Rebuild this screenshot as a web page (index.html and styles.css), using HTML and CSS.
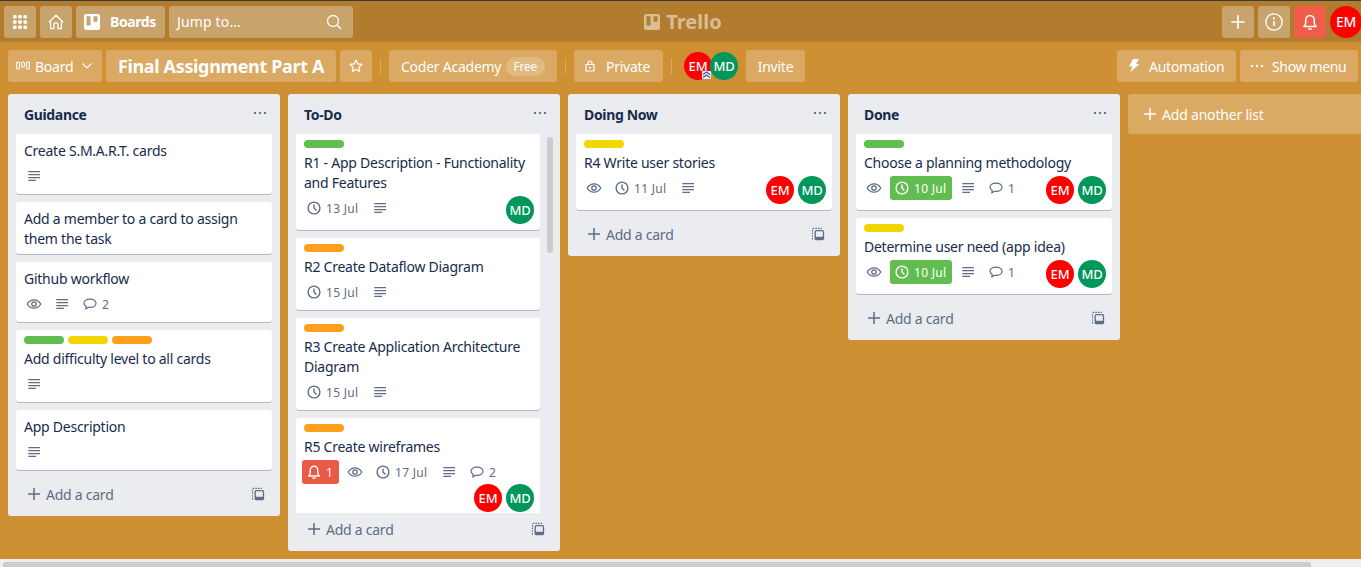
FILE: index.html
```html
<!DOCTYPE html>
<html lang="en">
<head>
  <meta charset="UTF-8">
  <meta name="viewport" content="width=device-width, initial-scale=1.0">
  <title>Final Assignment Part A | Trello</title>
  <link rel="stylesheet" href="styles.css">
</head>
<body>
  <!-- shared icons -->
  <svg class="sprite" xmlns="http://www.w3.org/2000/svg">
    <symbol id="i-eye" viewBox="0 0 16 16"><path d="M1.2 8C2.9 5.2 5.2 3.8 8 3.8s5.1 1.4 6.8 4.2c-1.7 2.8-4 4.2-6.8 4.2S2.9 10.800 1.200 8z" fill="none" stroke="currentColor" stroke-width="1.300"/><circle cx="8" cy="8" r="2.200" fill="none" stroke="currentColor" stroke-width="1.300"/></symbol>
    <symbol id="i-clock" viewBox="0 0 16 16"><circle cx="8" cy="8" r="5.900" fill="none" stroke="currentColor" stroke-width="1.400"/><path d="M8 4.400V8l2.400 2.400" fill="none" stroke="currentColor" stroke-width="1.400"/></symbol>
    <symbol id="i-desc" viewBox="0 0 16 16"><path d="M2.300 3.600h11.700M2.300 6.600h11.700M2.300 9.600h11.700M2.300 12.400h7.700" fill="none" stroke="currentColor" stroke-width="1.100"/></symbol>
    <symbol id="i-comment" viewBox="0 0 16 16"><path d="M8 3.200c3.300 0 6 1.700 6 4.100s-2.700 4.100-6 4.100c-.6 0-1.100 0-1.600-.1L3.800 13l.4-2.800C2.800 9.500 2 8.500 2 7.300c0-2.400 2.700-4.100 6-4.100z" fill="none" stroke="currentColor" stroke-width="1.200" stroke-linejoin="round"/></symbol>
    <symbol id="i-bell" viewBox="0 0 16 16"><path d="M2.600 12c1.200-.9 1.600-2 1.600-3.600V6.400C4.200 4 5.900 2.200 8 2.200s3.800 1.800 3.800 4.200v2c0 1.600.4 2.700 1.600 3.600z" fill="none" stroke="currentColor" stroke-width="1.400" stroke-linejoin="round"/><path d="M6.400 14.200h3.200" stroke="currentColor" stroke-width="1.400"/></symbol>
    <symbol id="i-plus" viewBox="0 0 16 16"><path d="M8 2v12M2 8h12" stroke="currentColor" stroke-width="1.500"/></symbol>
    <symbol id="i-dots" viewBox="0 0 16 16"><circle cx="3" cy="8" r="1.200" fill="currentColor"/><circle cx="8" cy="8" r="1.200" fill="currentColor"/><circle cx="13" cy="8" r="1.200" fill="currentColor"/></symbol>
    <symbol id="i-template" viewBox="0 0 16 16"><rect x="5.200" y="4.700" width="8.300" height="8.800" rx="1.200" fill="none" stroke="currentColor" stroke-width="1.300"/><rect x="5" y="10.800" width="8.600" height="2.700" fill="currentColor"/><path d="M2.500 13.500V3.200a.8.800 0 0 1 .8-.8H12" fill="none" stroke="currentColor" stroke-width="1.100" stroke-dasharray="1.600 1.100"/></symbol>
    <symbol id="i-boards" viewBox="0 0 16 16"><path fill-rule="evenodd" d="M2.500 0h11A2.500 2.500 0 0 1 16 2.500v11a2.500 2.500 0 0 1-2.500 2.500h-11A2.500 2.500 0 0 1 0 13.500v-11A2.500 2.500 0 0 1 2.500 0zM2.500 2.200v9.300h4V2.200zM9.500 2.200v5.600h4V2.200z" fill="currentColor"/></symbol>
  </svg>

  <header class="topbar">
    <div class="topbar-left">
      <button class="nav-btn">
        <svg class="icon" viewBox="0 0 16 16"><g fill="currentColor"><rect x="1" y="1" width="3.600" height="3.600" rx="1"/><rect x="6.200" y="1" width="3.600" height="3.600" rx="1"/><rect x="11.400" y="1" width="3.600" height="3.600" rx="1"/><rect x="1" y="6.200" width="3.600" height="3.600" rx="1"/><rect x="6.200" y="6.200" width="3.600" height="3.600" rx="1"/><rect x="11.400" y="6.200" width="3.600" height="3.600" rx="1"/><rect x="1" y="11.400" width="3.600" height="3.600" rx="1"/><rect x="6.200" y="11.400" width="3.600" height="3.600" rx="1"/><rect x="11.400" y="11.400" width="3.600" height="3.600" rx="1"/></g></svg>
      </button>
      <button class="nav-btn">
        <svg class="icon" viewBox="0 0 16 16"><path d="M1.300 7.700 8 1.300l6.700 6.400-1.300 1.100v5.900h-3.300v-4a2.100 2.100 0 0 0-4.200 0v4H2.600V8.800z" fill="none" stroke="currentColor" stroke-width="1.300" stroke-linejoin="round"/></svg>
      </button>
      <button class="nav-btn nav-boards">
        <svg class="icon"><use href="#i-boards"/></svg>
        <span>Boards</span>
      </button>
      <div class="search">
        <span class="search-text">Jump to…</span>
        <svg class="icon" viewBox="0 0 16 16"><circle cx="7" cy="7" r="5.500" fill="none" stroke="currentColor" stroke-width="1.300"/><path d="m11 11 4 4" stroke="currentColor" stroke-width="1.500"/></svg>
      </div>
    </div>
    <div class="logo">
      <svg class="logo-icon"><use href="#i-boards"/></svg>
      <span>Trello</span>
    </div>
    <div class="topbar-right">
      <button class="nav-btn"><svg class="icon-big"><use href="#i-plus"/></svg></button>
      <button class="nav-btn">
        <svg class="icon-big" viewBox="0 0 16 16"><circle cx="8" cy="8" r="7.200" fill="none" stroke="currentColor" stroke-width="1.200"/><path d="M8 7v4.500" stroke="currentColor" stroke-width="1.400"/><circle cx="8" cy="4.800" r="1" fill="currentColor"/></svg>
      </button>
      <button class="nav-btn nav-alert"><svg class="icon-big"><use href="#i-bell"/></svg></button>
      <div class="avatar avatar-em avatar-me">EM</div>
    </div>
  </header>

  <div class="board-head">
    <button class="head-btn head-view">
      <svg class="icon-view" viewBox="0 0 14 10"><g fill="none" stroke="currentColor" stroke-width="1.100"><rect x=".6" y="1" width="2.800" height="7" rx="1"/><rect x="5.600" y="1" width="2.800" height="5" rx="1"/><rect x="10.600" y="1" width="2.800" height="7" rx="1"/></g></svg>
      <span class="head-text">Board</span>
      <svg class="icon-chevron" viewBox="0 0 10 6"><path d="m.5.500 4.500 4.500L9.500.500" fill="none" stroke="currentColor" stroke-width="1.100"/></svg>
    </button>
    <h1 class="head-btn board-title">Final Assignment Part A</h1>
    <button class="head-btn head-square">
      <svg class="icon" viewBox="0 0 16 16"><path d="m8 2 1.800 3.900 4.200.5-3.100 2.900.8 4.200L8 11.400l-3.700 2.100.8-4.200L2 6.400l4.200-.5z" fill="none" stroke="currentColor" stroke-width="1.200" stroke-linejoin="round"/></svg>
    </button>
    <span class="divider"></span>
    <button class="head-btn head-team">
      <span class="head-text">Coder Academy</span>
      <span class="pill">Free</span>
    </button>
    <span class="divider"></span>
    <button class="head-btn head-private">
      <svg class="icon-lock" viewBox="0 0 10 12"><path d="M1 4.500h8v6.500H1zM3 4.500V3a2 2 0 0 1 4 0v1.500" fill="none" stroke="currentColor" stroke-width="1.200"/><circle cx="5" cy="7.700" r="1" fill="currentColor"/></svg>
      <span class="head-text">Private</span>
    </button>
    <span class="divider"></span>
    <div class="head-members">
      <div class="avatar avatar-em">EM
        <svg class="admin-mark" viewBox="0 0 9 8"><rect width="9" height="8" rx="1" fill="#e8edf5"/><path d="m1 3.500 3.500-2.500L8 3.500M1 6.500 4.500 4 8 6.500" fill="none" stroke="#2a5fb0" stroke-width="1.100"/></svg>
      </div>
      <div class="avatar avatar-md">MD</div>
    </div>
    <button class="head-btn head-invite"><span class="head-text">Invite</span></button>
    <div class="head-right">
      <button class="head-btn head-auto">
        <svg class="icon-bolt" viewBox="0 0 12 14"><path d="M5 0h6L8 5h3.500L2 13.500 4.500 7.500H1z" fill="currentColor"/></svg>
        <span class="head-text">Automation</span>
      </button>
      <button class="head-btn head-menu">
        <svg class="icon"><use href="#i-dots"/></svg>
        <span class="head-text">Show menu</span>
      </button>
    </div>
  </div>

  <main class="board">
    <section class="list">
      <div class="list-head"><h2>Guidance</h2><svg class="icon list-more"><use href="#i-dots"/></svg></div>
      <div class="cards">
        <article class="card">
          <p class="card-title">Create S.M.A.R.T. cards</p>
          <div class="card-foot"><div class="badges">
            <span class="badge"><svg class="icon"><use href="#i-desc"/></svg></span>
          </div></div>
        </article>
        <article class="card">
          <p class="card-title">Add a member to a card to assign them the task</p>
        </article>
        <article class="card">
          <p class="card-title">Github workflow</p>
          <div class="card-foot"><div class="badges">
            <span class="badge"><svg class="icon"><use href="#i-eye"/></svg></span>
            <span class="badge"><svg class="icon"><use href="#i-desc"/></svg></span>
            <span class="badge"><svg class="icon"><use href="#i-comment"/></svg><span class="badge-text">2</span></span>
          </div></div>
        </article>
        <article class="card">
          <div class="labels"><span class="label green"></span><span class="label yellow"></span><span class="label orange"></span></div>
          <p class="card-title">Add difficulty level to all cards</p>
          <div class="card-foot"><div class="badges">
            <span class="badge"><svg class="icon"><use href="#i-desc"/></svg></span>
          </div></div>
        </article>
        <article class="card">
          <p class="card-title">App Description</p>
          <div class="card-foot"><div class="badges">
            <span class="badge"><svg class="icon"><use href="#i-desc"/></svg></span>
          </div></div>
        </article>
      </div>
      <div class="list-foot"><svg class="icon"><use href="#i-plus"/></svg><span class="foot-text">Add a card</span><svg class="icon template"><use href="#i-template"/></svg></div>
    </section>

    <section class="list">
      <div class="list-head"><h2>To-Do</h2><svg class="icon list-more"><use href="#i-dots"/></svg></div>
      <div class="cards cards-scroll">
        <article class="card">
          <div class="labels"><span class="label green"></span></div>
          <p class="card-title">R1 - App Description - Functionality and Features</p>
          <div class="card-foot">
            <div class="badges">
              <span class="badge"><svg class="icon"><use href="#i-clock"/></svg><span class="badge-text date">13 Jul</span></span>
              <span class="badge"><svg class="icon"><use href="#i-desc"/></svg></span>
            </div>
            <div class="members"><div class="avatar avatar-md">MD</div></div>
          </div>
        </article>
        <article class="card">
          <div class="labels"><span class="label orange"></span></div>
          <p class="card-title">R2 Create Dataflow Diagram</p>
          <div class="card-foot"><div class="badges">
            <span class="badge"><svg class="icon"><use href="#i-clock"/></svg><span class="badge-text date">15 Jul</span></span>
            <span class="badge"><svg class="icon"><use href="#i-desc"/></svg></span>
          </div></div>
        </article>
        <article class="card">
          <div class="labels"><span class="label orange"></span></div>
          <p class="card-title">R3 Create Application Architecture Diagram</p>
          <div class="card-foot"><div class="badges">
            <span class="badge"><svg class="icon"><use href="#i-clock"/></svg><span class="badge-text date">15 Jul</span></span>
            <span class="badge"><svg class="icon"><use href="#i-desc"/></svg></span>
          </div></div>
        </article>
        <article class="card">
          <div class="labels"><span class="label orange"></span></div>
          <p class="card-title">R5 Create wireframes</p>
          <div class="card-foot">
            <div class="badges">
              <span class="badge badge-alert"><svg class="icon"><use href="#i-bell"/></svg><span class="badge-text">1</span></span>
              <span class="badge"><svg class="icon"><use href="#i-eye"/></svg></span>
              <span class="badge"><svg class="icon"><use href="#i-clock"/></svg><span class="badge-text date">17 Jul</span></span>
              <span class="badge"><svg class="icon"><use href="#i-desc"/></svg></span>
              <span class="badge"><svg class="icon"><use href="#i-comment"/></svg><span class="badge-text">2</span></span>
            </div>
            <div class="members"><div class="avatar avatar-em">EM</div><div class="avatar avatar-md">MD</div></div>
          </div>
        </article>
      </div>
      <span class="scroll-thumb"></span>
      <div class="list-foot"><svg class="icon"><use href="#i-plus"/></svg><span class="foot-text">Add a card</span><svg class="icon template"><use href="#i-template"/></svg></div>
    </section>

    <section class="list">
      <div class="list-head"><h2>Doing Now</h2><svg class="icon list-more"><use href="#i-dots"/></svg></div>
      <div class="cards">
        <article class="card">
          <div class="labels"><span class="label yellow"></span></div>
          <p class="card-title">R4 Write user stories</p>
          <div class="card-foot">
            <div class="badges">
              <span class="badge"><svg class="icon"><use href="#i-eye"/></svg></span>
              <span class="badge"><svg class="icon"><use href="#i-clock"/></svg><span class="badge-text date">11 Jul</span></span>
              <span class="badge"><svg class="icon"><use href="#i-desc"/></svg></span>
            </div>
            <div class="members"><div class="avatar avatar-em">EM</div><div class="avatar avatar-md">MD</div></div>
          </div>
        </article>
      </div>
      <div class="list-foot"><svg class="icon"><use href="#i-plus"/></svg><span class="foot-text">Add a card</span><svg class="icon template"><use href="#i-template"/></svg></div>
    </section>

    <section class="list">
      <div class="list-head"><h2>Done</h2><svg class="icon list-more"><use href="#i-dots"/></svg></div>
      <div class="cards">
        <article class="card">
          <div class="labels"><span class="label green"></span></div>
          <p class="card-title">Choose a planning methodology</p>
          <div class="card-foot">
            <div class="badges">
              <span class="badge"><svg class="icon"><use href="#i-eye"/></svg></span>
              <span class="badge badge-done"><svg class="icon"><use href="#i-clock"/></svg><span class="badge-text date">10 Jul</span></span>
              <span class="badge"><svg class="icon"><use href="#i-desc"/></svg></span>
              <span class="badge"><svg class="icon"><use href="#i-comment"/></svg><span class="badge-text">1</span></span>
            </div>
            <div class="members"><div class="avatar avatar-em">EM</div><div class="avatar avatar-md">MD</div></div>
          </div>
        </article>
        <article class="card">
          <div class="labels"><span class="label yellow"></span></div>
          <p class="card-title">Determine user need (app idea)</p>
          <div class="card-foot">
            <div class="badges">
              <span class="badge"><svg class="icon"><use href="#i-eye"/></svg></span>
              <span class="badge badge-done"><svg class="icon"><use href="#i-clock"/></svg><span class="badge-text date">10 Jul</span></span>
              <span class="badge"><svg class="icon"><use href="#i-desc"/></svg></span>
              <span class="badge"><svg class="icon"><use href="#i-comment"/></svg><span class="badge-text">1</span></span>
            </div>
            <div class="members"><div class="avatar avatar-em">EM</div><div class="avatar avatar-md">MD</div></div>
          </div>
        </article>
      </div>
      <div class="list-foot"><svg class="icon"><use href="#i-plus"/></svg><span class="foot-text">Add a card</span><svg class="icon template"><use href="#i-template"/></svg></div>
    </section>

    <div class="add-list"><svg class="icon"><use href="#i-plus"/></svg><span class="head-text">Add another list</span></div>
  </main>

  <div class="page-scroll"><span class="page-thumb"></span></div>
</body>
</html>
```

FILE: styles.css
```css
* {
  box-sizing: border-box;
}
html, body {
  height: 100%;
}
body {
  margin: 0;
  display: flex;
  flex-direction: column;
  overflow: hidden;
  background-color: #cf8f33;
  color: #172b4d;
  font-family: "Noto Sans", "Open Sans", sans-serif;
  font-size: 14px;
  letter-spacing: -0.25px;
  line-height: 20px;
}
button {
  border: none;
  padding: 0;
  color: inherit;
  font: inherit;
  letter-spacing: inherit;
}
h1, h2, p {
  margin: 0;
}
.sprite {
  display: none;
}
.icon {
  width: 16px;
  height: 16px;
  flex-shrink: 0;
}
.icon-big {
  width: 18px;
  height: 18px;
  flex-shrink: 0;
}

/* top bar */
.topbar {
  display: grid;
  grid-template-columns: 1fr auto 1fr;
  align-items: center;
  flex-shrink: 0;
  height: 42px;
  padding: 5px 0 4px 4px;
  border-top: 1px solid #3b3b3b;
  background-color: #b17c2d;
  color: #fff;
}
.topbar-left, .topbar-right {
  display: flex;
  align-items: center;
  gap: 4px;
}
.topbar-right {
  justify-content: flex-end;
  margin-right: -1px;
}
.nav-btn {
  display: flex;
  align-items: center;
  justify-content: center;
  width: 32px;
  height: 32px;
  border-radius: 3px;
  background-color: rgba(255, 255, 255, 0.3);
}
.nav-boards {
  justify-content: flex-start;
  gap: 10px;
  width: 89px;
  padding-left: 8px;
  font-weight: 700;
  letter-spacing: -0.4px;
}
.search {
  display: flex;
  align-items: center;
  justify-content: space-between;
  width: 184px;
  height: 32px;
  padding: 0 11px 0 8px;
  border-radius: 3px;
  background-color: rgba(255, 255, 255, 0.3);
}
.search-text {
  letter-spacing: 0.15px;
}
.logo {
  display: flex;
  align-items: center;
  gap: 6px;
  margin-left: 1px;
  color: rgba(255, 255, 255, 0.5);
  font-size: 20px;
  font-weight: 700;
  letter-spacing: 0;
}
.logo-icon {
  width: 16px;
  height: 16px;
}
.nav-alert {
  background-color: #ee5e4a;
}
.avatar {
  position: relative;
  display: flex;
  align-items: center;
  justify-content: center;
  flex-shrink: 0;
  width: 28px;
  height: 28px;
  border-radius: 50%;
  color: #fff;
  font-size: 13px;
  font-weight: 500;
  letter-spacing: -0.2px;
}
.avatar-em {
  background-color: #f00;
}
.avatar-md {
  background-color: #00975b;
}
.avatar-me {
  width: 32px;
  height: 32px;
  font-size: 14px;
}

/* board header */
.board-head {
  display: flex;
  align-items: center;
  flex-shrink: 0;
  gap: 4px;
  padding: 8px 3px 12px 8px;
  color: #fff;
}
.head-btn {
  display: flex;
  align-items: center;
  height: 32px;
  border-radius: 3px;
  background-color: rgba(255, 255, 255, 0.24);
  white-space: nowrap;
}
.head-text {
  padding-top: 2px;
}
.head-view {
  width: 94px;
  padding-left: 8px;
}
.icon-view {
  width: 14px;
  height: 10px;
  margin-right: 5px;
}
.icon-chevron {
  width: 10px;
  height: 6px;
  margin-left: 9px;
}
.board-title {
  justify-content: center;
  width: 230px;
  font-size: 18px;
  font-weight: 700;
  letter-spacing: -0.35px;
}
.head-square {
  justify-content: center;
  width: 32px;
}
.divider {
  width: 1px;
  height: 16px;
  margin: 0 4px;
  background-color: rgba(255, 255, 255, 0.24);
}
.head-team {
  justify-content: space-between;
  width: 168px;
  padding: 0 12px;
}
.pill {
  margin-top: 1px;
  padding: 0 8px;
  border-radius: 10px;
  background-color: rgba(255, 255, 255, 0.2);
  font-size: 12px;
  line-height: 19px;
}
.head-private {
  gap: 11px;
  width: 89px;
  padding-left: 11px;
}
.icon-lock {
  width: 10px;
  height: 12px;
}
.head-members {
  display: flex;
  margin: 0 4px;
}
.head-members .avatar + .avatar {
  margin-left: -2px;
}
.admin-mark {
  position: absolute;
  right: 1px;
  bottom: 1px;
  width: 9px;
  height: 8px;
}
.head-invite {
  justify-content: center;
  width: 59px;
}
.head-right {
  display: flex;
  gap: 4px;
  margin-left: auto;
}
.head-auto {
  gap: 9px;
  width: 119px;
  padding-left: 11px;
}
.icon-bolt {
  width: 12px;
  height: 14px;
}
.head-menu {
  gap: 7px;
  width: 118px;
  padding-left: 9px;
  letter-spacing: -0.35px;
}

/* lists */
.board {
  display: flex;
  align-items: flex-start;
  flex: 1;
  gap: 8px;
  min-height: 0;
  padding: 0 0 8px 8px;
  overflow: hidden;
}
.list {
  position: relative;
  display: flex;
  flex-direction: column;
  flex-shrink: 0;
  width: 272px;
  max-height: 100%;
  border-radius: 3px;
  background-color: #ebecf0;
}
.list-head {
  display: flex;
  align-items: center;
  justify-content: space-between;
  flex-shrink: 0;
  height: 40px;
  padding: 0 12px 0 16px;
}
.list-head h2 {
  padding-top: 2px;
  font-size: 14px;
  font-weight: 700;
  letter-spacing: -0.35px;
}
.list-more {
  color: #6b778c;
  margin-top: -2px;
}
.cards {
  flex: 0 1 auto;
  min-height: 0;
  padding: 0 8px;
  overflow: hidden;
}
.cards-scroll {
  padding-right: 20px;
}
.scroll-thumb {
  position: absolute;
  top: 43px;
  right: 7px;
  width: 6px;
  height: 116px;
  border-radius: 3px;
  background-color: #ccc;
}
.list-foot {
  display: flex;
  align-items: center;
  flex-shrink: 0;
  gap: 4px;
  height: 38px;
  padding: 0 14px 6px 18px;
  color: #5e6c84;
}
.foot-text {
  padding-top: 2px;
}
.template {
  margin-left: auto;
}

/* cards */
.card {
  margin-bottom: 8px;
  padding: 6px 6px 2px 8px;
  border-radius: 3px;
  background-color: #fff;
  box-shadow: 0 1px 0 rgba(9, 30, 66, 0.25);
}
.labels {
  display: flex;
  gap: 4px;
  margin-bottom: 4px;
}
.label {
  width: 40px;
  height: 8px;
  border-radius: 4px;
}
.green {
  background-color: #61bd4f;
}
.yellow {
  background-color: #f2d600;
}
.orange {
  background-color: #ff9f1a;
}
.card-title {
  margin-bottom: 3px;
  padding-top: 1px;
}
.card-foot {
  display: flex;
  flex-wrap: wrap;
  align-items: flex-start;
  padding-bottom: 4px;
}
.badges {
  display: flex;
  gap: 4px;
  margin-left: -2px;
}
.badge {
  display: flex;
  align-items: center;
  gap: 4px;
  height: 24px;
  padding: 0 4px;
  border-radius: 3px;
  color: #5e6c84;
  font-size: 12px;
  letter-spacing: 0;
}
.badge-text {
  padding-top: 1px;
}
.date {
  width: 34px;
  letter-spacing: 0.3px;
  white-space: nowrap;
}
.badge-alert {
  background-color: #eb5a46;
  color: #fff;
}
.badge-alert .badge-text {
  width: 9px;
}
.badge-done {
  background-color: #61bd4f;
  color: #fff;
}
.members {
  display: flex;
  gap: 4px;
  margin-left: auto;
}

/* add another list */
.add-list {
  display: flex;
  align-items: center;
  flex-shrink: 0;
  gap: 4px;
  width: 272px;
  height: 40px;
  padding-left: 14px;
  border-radius: 3px;
  background-color: rgba(255, 255, 255, 0.24);
  color: #fff;
  letter-spacing: -0.2px;
}

/* window scrollbar */
.page-scroll {
  flex-shrink: 0;
  height: 8px;
  padding: 3px 0 0 3px;
  background-color: #eee;
}
.page-thumb {
  display: block;
  width: 1308px;
  height: 5px;
  border-radius: 3px 3px 0 0;
  background-color: #ccc;
}
```
